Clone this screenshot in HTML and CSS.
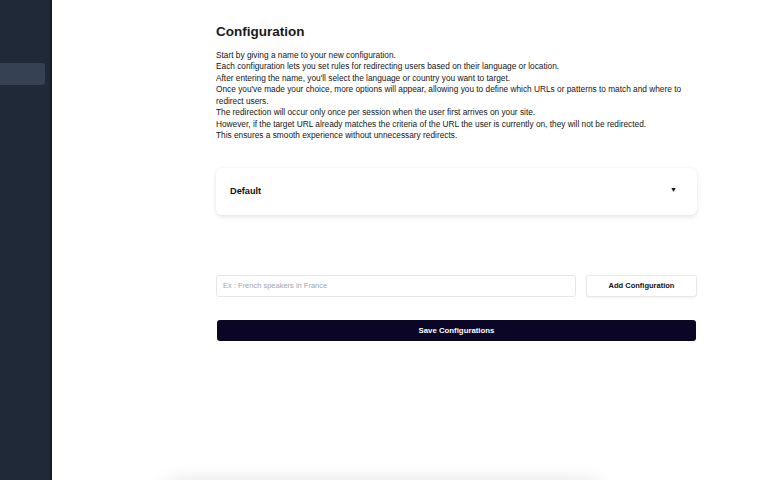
FILE: index.html
```html
<!DOCTYPE html>
<html lang="en">
<head>
<meta charset="utf-8">
<title>Configuration</title>
<link rel="stylesheet" href="styles.css">
</head>
<body>
<div class="app">
  <aside class="sidebar">
    <div class="nav-item active"></div>
  </aside>
  <main class="main">
    <div class="content">
      <h1 class="title">Configuration</h1>
      <div class="intro">
        <p>Start by giving a name to your new configuration.</p>
        <p>Each configuration lets you set rules for redirecting users based on their language or location.</p>
        <p>After entering the name, you'll select the language or country you want to target.</p>
        <p>Once you've made your choice, more options will appear, allowing you to define which URLs or patterns to match and where to redirect users.</p>
        <p>The redirection will occur only once per session when the user first arrives on your site.</p>
        <p>However, if the target URL already matches the criteria of the URL the user is currently on, they will not be redirected.</p>
        <p>This ensures a smooth experience without unnecessary redirects.</p>
      </div>
      <div class="config-card">
        <span class="config-name">Default</span>
        <span class="caret">&#9660;</span>
      </div>
      <div class="add-row">
        <input class="name-input" type="text" placeholder="Ex : French speakers in France">
        <button class="add-btn">Add Configuration</button>
      </div>
      <button class="save-btn">Save Configurations</button>
    </div>
    <div class="floating-panel"></div>
  </main>
</div>
</body>
</html>
```
FILE: styles.css
```css
* { box-sizing: border-box; }
html, body { margin: 0; padding: 0; height: 100%; }
body {
  font-family: "Liberation Sans", Arial, sans-serif;
  color: #111;
  background: #fff;
  overflow: hidden;
}
.app { display: flex; height: 480px; overflow: hidden; }
.sidebar {
  width: 52px;
  flex: none;
  background: #1f2938;
  border-right: 2px solid #141b27;
  padding-top: 63px;
}
.nav-item {
  width: 45px;
  height: 22px;
  border-radius: 0 3px 3px 0;
}
.nav-item.active { background: #364253; }
.main { flex: 1; position: relative; overflow: hidden; }
.content {
  width: 481px;
  margin-left: 164px;
  padding-top: 23px;
}
.title {
  margin: 0 0 9px;
  font-size: 13.5px;
  font-weight: 700;
  line-height: 18px;
  color: #1a1a1a;
}
.intro { font-size: 8.3px; line-height: 11.45px; color: #151515; }
.intro p { margin: 0; }
.config-card {
  margin-top: 26px;
  height: 47px;
  display: flex;
  align-items: center;
  justify-content: space-between;
  padding: 0 20px 0 14px;
  border-radius: 6px;
  background: #fff;
  box-shadow: 0 2px 5px rgba(0,0,0,0.10), 0 0 2px rgba(0,0,0,0.04);
}
.config-name { font-size: 9.2px; font-weight: 700; color: #111; }
.caret { font-size: 7px; color: #111; margin-top: -3px; }
.add-row {
  margin-top: 60px;
  display: flex;
  gap: 10px;
  height: 22px;
}
.name-input {
  flex: 1;
  height: 22px;
  border: 1px solid #e3e5e8;
  border-radius: 3px;
  padding: 0 6px;
  font-family: inherit;
  font-size: 7.5px;
  color: #333;
  background: #fff;
  outline: none;
}
.name-input::placeholder { color: #a3a6ab; }
.add-btn {
  width: 111px;
  height: 22px;
  border: 1px solid #e7e8eb;
  border-radius: 3px;
  background: #fff;
  font-family: inherit;
  font-size: 7.5px;
  font-weight: 700;
  color: #111;
  box-shadow: 0 1px 2px rgba(0,0,0,0.05);
}
.save-btn {
  display: block;
  margin: 23px 1px 0;
  width: 479px;
  height: 21px;
  border: none;
  border-radius: 3px;
  background: #0b0526;
  color: #fff;
  font-family: inherit;
  font-size: 7.8px;
  font-weight: 700;
}
.floating-panel {
  position: absolute;
  left: 115px;
  top: 484px;
  width: 430px;
  height: 80px;
  background: #fff;
  border-radius: 8px;
  box-shadow: 0 0 22px rgba(0,0,0,0.16);
}
```
